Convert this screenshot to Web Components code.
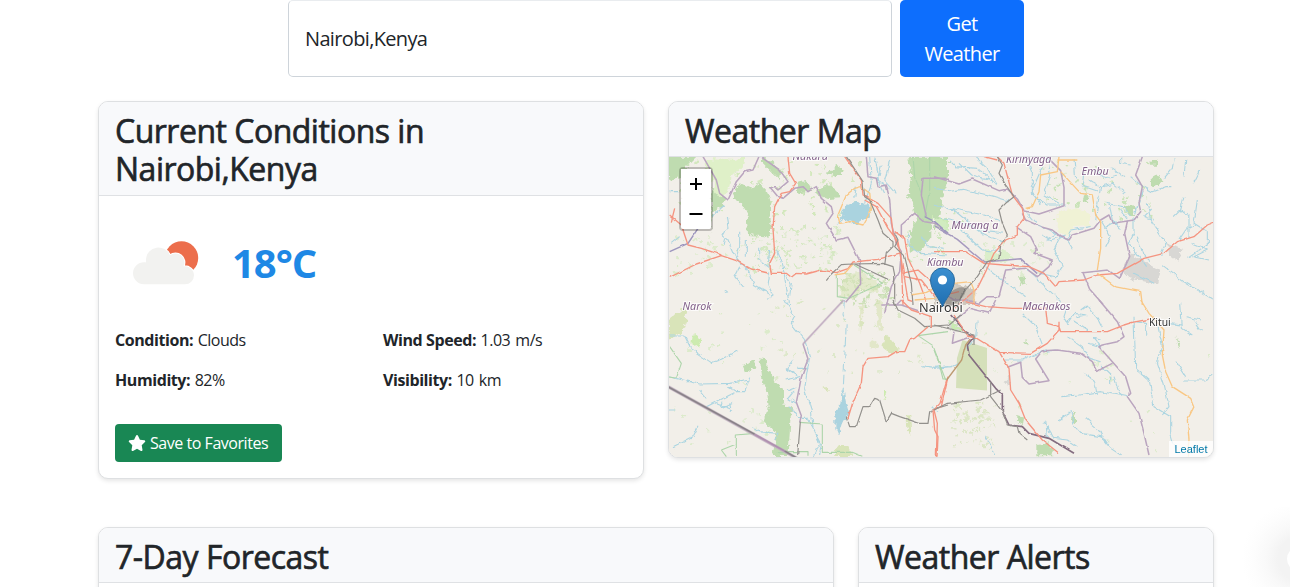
<!DOCTYPE html>
<html lang="en"><head><meta charset="utf-8"><title>Weather Dashboard</title>
<style>
html,body{margin:0;height:587px;overflow:hidden;background:#fff}
body{font-family:"Open Sans","Noto Sans",sans-serif;font-size:16px;line-height:24px;color:#212529}
</style></head><body>
<weather-app></weather-app>
<script>
const define=(name,html)=>customElements.define(name,class extends HTMLElement{
  constructor(){super();this.attachShadow({mode:'open'}).innerHTML=html;}
});

define('search-bar',`<style>
:host{display:flex;gap:8px;height:77px;width:736px;margin:0 auto;position:relative}
.field{box-sizing:border-box;width:604px;border:1px solid #ced4da;border-top-color:#e9ecef;border-radius:5px;padding:0 16px;display:flex;align-items:center;font-size:20px;letter-spacing:-.65px}
button{width:124px;border:0;border-radius:5px;background:#0d6efd;color:#fff;font:20px/30px "Open Sans","Noto Sans",sans-serif;letter-spacing:-.65px;padding:0 16px}
</style><div class="field"><slot></slot></div><button>Get Weather</button>`);

define('info-card',`<style>
:host{display:block;box-sizing:border-box;border:1px solid #dee0e2;border-radius:10px;background:#fff;box-shadow:0 2px 4px rgba(0,0,0,.1);overflow:hidden;min-width:0}
header{padding:10px 16px 6px;background:#f8f9fb;border-bottom:1px solid #dfe1e4}
h2{margin:0;font-size:32px;line-height:38.4px;font-weight:500;letter-spacing:-.5px;-webkit-text-stroke:.65px currentColor}
</style><header><h2><slot name="title"></slot></h2></header><slot></slot>`);

define('weather-icon',`<style>:host{display:block;width:100px;height:100px}svg{display:block}</style>
<svg width="100" height="100" viewBox="0 0 100 100"><circle cx="66.500" cy="44" r="16.700" fill="#ec6e4c"/>
<path d="M29 70.300a11 11 0 0 1 0-22c1 0 1.500.100 2 .200V45a12.500 12.500 0 0 1 24-3.800A9 9 0 0 1 68.500 52.300a9.200 9.200 0 0 1 10.500 9 9 9 0 0 1-9 9z" fill="#f2f2f0" stroke="#fff" stroke-width="2" paint-order="stroke"/></svg>`);

define('data-pair',`<style>:host{display:block}b{font-weight:700;letter-spacing:-.42px}span{letter-spacing:-.5px;word-spacing:1.500px;margin-left:4.500px}</style><b><slot name="label"></slot></b><span><slot></slot></span>`);

define('save-button',`<style>:host{display:block}button{display:flex;align-items:center;gap:4px;box-sizing:border-box;width:167px;height:38px;padding:0 13px;border:0;border-radius:4px;background:#198754;color:#fff;font:16px "Open Sans","Noto Sans",sans-serif;letter-spacing:-.46px;white-space:nowrap}svg{flex:none}</style>
<button><svg width="18" height="16" viewBox="0 0 576 512"><path fill="#fff" d="M316.900 18C311.600 7 300.400 0 288.100 0s-23.400 7-28.800 18L195 150.300 51.400 171.500c-12 1.800-22 10.200-25.700 21.700s-.7 24.200 7.900 32.700L137.800 329 113.200 474.700c-2 12 3 24.200 12.900 31.300s23 8 33.800 2.300l128.300-68.500 128.300 68.500c10.800 5.700 23.900 4.900 33.800-2.300s14.900-19.300 12.900-31.300L438.500 329 542.700 225.900c8.600-8.500 11.700-21.200 7.900-32.700s-13.700-19.900-25.700-21.700L381.200 150.300 316.900 18z"/></svg><slot></slot></button>`);

define('current-conditions',`<style>
:host{display:block;padding:16px;height:250px}
.now{display:flex;align-items:center;gap:17px;height:104px}
.temp{font-size:40px;font-weight:700;color:#1e88e5;letter-spacing:-1px;line-height:48px;padding-bottom:2px}
.facts{display:grid;grid-template-columns:1fr 1fr;gap:16px 24px;margin-top:12px}
save-button{margin-top:32px}
</style><div class="now"><weather-icon></weather-icon><div class="temp">18°C</div></div>
<div class="facts"><data-pair><span slot="label">Condition:</span>Clouds</data-pair><data-pair><span slot="label">Wind Speed:</span>1.03 m/s</data-pair>
<data-pair><span slot="label">Humidity:</span>82%</data-pair><data-pair><span slot="label">Visibility:</span>10 km</data-pair></div>
<save-button>Save to Favorites</save-button>`);

define('map-controls',`<style>:host{display:block;width:30px;border:2px solid rgba(0,0,0,.22);border-radius:4px;background-clip:padding-box}
button{display:flex;align-items:center;justify-content:center;box-sizing:border-box;width:30px;height:30px;border:0;padding:0;background:#fff;border-radius:0 0 2px 2px}button:first-child{border-bottom:1px solid #ccc;height:31px;border-radius:2px 2px 0 0}
svg{display:block;flex:none}
</style><button aria-label="Zoom in"><svg width="14" height="14"><path d="M7 1v12M1 7h12" stroke="#000" stroke-width="2"/></svg></button><button aria-label="Zoom out"><svg width="14" height="14"><path d="M.5 7h13" stroke="#000" stroke-width="2"/></svg></button>`);

/* Each quadrant of the map is drawn on its own 3x grid. */
define('region-map',`<style>
:host{display:block;position:relative;height:300px;background:#f2efe9}
svg.map{display:block;width:544px;height:300px}
map-controls{position:absolute;left:10px;top:10px}
.credit{position:absolute;right:0;bottom:0;width:44px;height:16px;text-align:center;background:rgba(255,255,255,.8);font:11px/16px "Liberation Sans",Arial,sans-serif;color:#0078a8}
.r{stroke:#acd5e1;stroke-width:3.3;fill:none}.red{stroke:#f59480;stroke-width:4;fill:none}.pur{stroke:#baa5bf;stroke-width:4.600;fill:none}.dk{stroke:#92908c;stroke-width:3.6;fill:none}.or{stroke:#f9c784;stroke-width:4;fill:none}.g{fill:#bfdcb0;stroke:none}.pg{fill:#d9e4b9}.gl{stroke:#add5aa;stroke-width:3.3;fill:none}
path{stroke-linejoin:round}
text{font-family:"Noto Sans",sans-serif;font-size:10.700px;font-style:italic;fill:#805e88;stroke:#fff;stroke-width:2.200px;paint-order:stroke;stroke-opacity:.75}
text.town{font-style:normal;fill:#333}
</style>
<svg class="map" viewBox="669 157 544 300">
<defs><filter id="rough" x="-5%" y="-5%" width="110%" height="110%"><feTurbulence type="fractalNoise" baseFrequency=".13" numOctaves="3" seed="7"/><feDisplacementMap in="SourceGraphic" scale="5" xChannelSelector="R" yChannelSelector="G"/></filter>
<filter id="fine" x="-5%" y="-5%" width="110%" height="110%"><feTurbulence type="fractalNoise" baseFrequency=".12" numOctaves="2" seed="5"/><feDisplacementMap in="SourceGraphic" scale="2.500" xChannelSelector="R" yChannelSelector="G"/></filter>
<filter id="edge"><feTurbulence type="fractalNoise" baseFrequency=".2" numOctaves="3" seed="3"/><feDisplacementMap in="SourceGraphic" scale="7" xChannelSelector="R" yChannelSelector="G"/></filter>
<linearGradient id="pin" x2="0" y2="1"><stop stop-color="#3b8fd0"/><stop offset="1" stop-color="#1f6eb0"/></linearGradient></defs>
<rect x="669" y="157" width="544" height="300" fill="#f2efe9"/>
<g filter="url(#edge)">
 <g id="specks"></g>
 <g transform="translate(668 150) scale(.333333)">
  <path class="g" d="M0 20h85l-30 30-15 30-40 10zM130 110l50 40-45 40-5 60zM215 100l30 15 30-15 25 25 10 40-5 95-65-5-5-70-20-35-25-5zM285 20l25 15 30 30-5 25-30-30-20-20zM385 95l30-5 15 25-20 20-22-10zM440 125l40-22 25 17 15 25-40 2-30-12zM478 65l22-5 0-15 22 5 0 25-25 5zM720 20h95l10 30 15 30-20 60-30 80 0 40-35 50-30-10 5-60 15-40-25-70 10-50z"/>
  <path d="M110 40l30-15 60 5 30-10-5 25-35 40-10 40-25 20-20-25 10-30-30 15z" fill="#dff0c8"/>
  <path class="pg" d="M520 400l20-30 40-5 45 30 5 35-50-10-20 25-45-5z" opacity=".6"/><path d="M790 190l50 20v40l-35-30z" fill="#cbeab4"/>
  <path d="M528 170l30-13 20 8 25-3 3 35-25 15-15 10-35-12-16 0 10-12z" fill="#aad3df"/>
 </g>
 <g transform="translate(934 150) scale(.333333)">
  <path class="g" d="M0 20h42l0 60-18 70-5 50-19 45zM650 85l20-12 12 18-10 20-18-4zM650 32h22v12h-22zM450 135l12 5-3 20-12-8zM252 375l20 3 4 22-15 5zM575 165l25 5 0 30-25-5z"/>
  <path d="M368 190l55-18 45 20 0 35-50 5-15 30-35-25z" fill="#f0f2d5"/><path d="M590 310l90 50-8 42-95-18-10-35zM700 282l48 15-18 35-25-18z" fill="#d8d7d4"/>
  <path d="M0 415l30-5 25-10 50 10 20 15-5 40H0z" fill="#cfc8be"/><path d="M155 295l25 15 30-10 35 25-60 8-35 10z" fill="#dbeeca"/><path d="M0 200l35 12 10 35-45-20z" fill="#d1ecc0"/>
 </g>
 <g transform="translate(668 300) scale(.333333)">
  <path class="g" d="M275 175l20 3 0 20 25 45 25 20v50l30 10-8 35-5 110h-50l15-60-15-20-25-25 15-40-5-50-15-40zM225 195l35-15 5 20-35 20z"/>
  <path class="pg" d="M5 55l20-15 25-20 5 40-15 40-40 20zM650 105l15 5 30 40-30 10-22-18zM500 450l10-12h30l12 30h-50zM715 345l12 5 3 60-12-25zM470 260l13 10-8 10z"/>
  <path class="pg" opacity=".65" d="M622 0l16 0 5 90-10 5zM577 10l10 0-2 60-10 30zM605 120l25 5-5 20-20-5z"/>
  <path d="M525 262l-5 45-18 30 0 50 10 25 12-40 18-35-8-30z" fill="#aad3df"/><path d="M75 100l25 20-10 25-20-15zM645 270l10 5-7 30z" fill="#cdebb0"/>
 </g>
 <g transform="translate(934 300) scale(.333333)">
  <path class="g" d="M310 435l30-5 20 18-5 18h-45zM250 345l20 5-3 25-18-10zM415 335l8 10 0 25-8-5zM728 115l10 20-4 8zM275 115l6 20-7-3z"/><path d="M210 245l18-20v35zM45 60l40 25-15 15-25-15z" fill="#d8d7d4"/><path d="M45 60l45 30-35 0z" fill="#c8eab2"/>
 </g>
</g>
<path d="M962.500 340l24.500 8v42.500l-31-2.500 1-30z" fill="#d5e0ba"/>
<g filter="url(#rough)">
 <g transform="translate(668 150) scale(.333333)">
  <path class="r" d="M175 202l5 30-15 25 15 15 15 35 10 20 35 35 20 45 45 25M215 245l0 45-10 30M235 270v50M275 290l0 40 25 20 5-50M325 300l20 50 10 60 10 55M170 265l-5 20M215 350l-15 30 25 30M305 370l-5 35 15 30-15 10M355 375l15 25-5 35M180 430l-10-8M565 110l-5 30M605 20l5 80-20 60M620 20l15 75 30 20M640 50l-10 40 20 40M665 30l-15 60 35 40M5 125h30M10 280l25-20M170 165l-40 35M720 250l5 40 30 20 85 5M760 260l20 30 50 5M510 220l25-20"/>
 </g>
 <g transform="translate(934 150) scale(.333333)">
  <path class="r" d="M0 115l55 8 30-5 90 20 50 15M50 35l15 15 65 5 30 25 25 25M75 40l35 35 65 15M0 165l60 15 70 60 55 5 20 5M50 175l100 20 55 20M20 205l90 20 40 30 55 20M80 240l65 60 55 5M120 20l40 35 30 50M275 25l20 45 0 60 40 35 60 0M325 50l-30 70 25 45M340 20l10 60-20 55 45 25M420 25l5 60M465 90l30 20 40-10 40 30M450 65l-5 40 45 15M480 60l30 25 40-10M530 50l40 30M560 20l0 20 30 5M590 80l30 25 35 20 40-15 20 0M625 120l-20 70M500 110l-10 60-5 40M525 160l10 50 25 25M560 180l20 30M515 160l55 10 20 30M280 190l30 35 40 15 50 30 10-30 60-10M325 255l25 15 45-15M335 270l35-20M380 260l-20 40 25 50-20 30-50-10M400 270l15 25M500 210l30 50-15 30M510 235l35-20M600 205l0 45-15 30 50 70M610 260l15 50 25 25M640 160l10 50 45 70-15 35M650 180l-20 20 30 10M750 140l-10 40 25 20 0 60M740 180l-20 20M790 150l-10 70 40 25 0 40-60 40M780 225l-25 15-20 30M770 280l50 20-40 20 45 10M600 370l60 30M690 350l60 45 90 55M155 350l50 40 70 50M280 360l60 55 40 40M720 25l-5 30-25 30M755 30l-5 50M800 60l-20 40"/>
 </g>
 <g transform="translate(668 300) scale(.333333)">
  <path class="r" d="M5 108l45 0 20 40 60 40 30-10 45-25M5 230l90 22 90-2 60-10M245 230l-15 45-25 0-90 45M180 260l25 15M75 245l-20 0M95 270l20 25M145 310l50 20M165 305l-5 20 35-15M185 310l5 25M15 440l60-30 15-30M5 330l20 0M250 380l20 15 60 5-10 20M350 0l30 50-10 20 40 50 15 50-10 60-5 40 20 60 5 50 20 50-20 50-40 5M365 320l25 35 30 0 40 75-5 35M385 205l35 0M360 270l25-10M375 180l-20 25 40 25-45 10M380 270l-20 25 25 15M530 320l15 30M760 197l40 5 40-5M790 320l20 15"/>
  <path class="r" stroke-dasharray="28 10" d="M530 0l-5 45 10 15-5 120-5 100"/>
 </g>
 <g transform="translate(934 300) scale(.333333)">
  <path class="r" d="M130 60l-5 50-25 35M0 205l50-5 30-15M210 180l55 0 60-25 40-5M265 40l40 40 20 50M400 20l-10 30 10 20 20-30 40 5M415 60l45 30M430 50l25-5M440 30l20-15 30 40 15 30M400 110l50 35 15 30 35 10M465 130l35 10-20-25 20 5M450 220l30 20 10 45M500 195l30 30 0 30M540 230l20 60M385 290l50-5 65-10 80 15M335 360l5 50M375 360l40-25 0 35 25 30 60 10 30 35 30 20M455 355l35 30 30 45M330 365l30 50 40 5 30 20M600 50l5 155 40 35 15 80 50 30 0 50 15 50M605 65l30 5 0 40M670 70l15 70-15 50 20 60 15 70-20 25M740 10l5 75 30 20M785 65l20 30M700 70l45 5M750 240l60 0 30-15M725 185l30 45M800 60l-45-10M155 410l30 55"/>
 </g>
</g>
<g filter="url(#fine)">
 <g transform="translate(668 150) scale(.333333)">
  <path class="gl" d="M508 370l0 70 35 5 100-45-85-55M735 20l5 60 20 50M785 20l0 100-15 80"/>
  <path class="pur" d="M105 20l40 70 10 40 25 20 25-55 25-30 25-5 20-45 10 10 50 35 25 35-30 25-10-10h-15l25 30 15 5 35-30 25-5 15 15 25-15 15 35 30 25 5 20-20 30 30 50 35-8 35 70 3 70-45 55M595 20l5 60 25 5 5 25 25-5 10 45 5 70 15 60 15 25-5 60-25 45-20 80M700 260l0-35 40-35 30 25 30 5 40 30M840 85l-75 0-5 50 15 65"/>
  <path d="M5 305l55-25 30-45M770 200l30 15 40 35" stroke="#9d96be" stroke-width="4.500" fill="none"/>
  <path class="red" d="M360 20l5 50 18 30-18 25-25 5-20 40-5 65 5 75-15 30 5 30h45l15 12 15-12 30 2 45-12 45 8 35-12 15-20 75-8 70-20M5 382l80-40 75-25 45 15 45 25 50 12M5 195l35 30 20 60 40 10 60 20M530 20l50 70 5 45 45 25 40 45 5 45 20 50 25 150 15 5M590 150l35 20 35 65 30 40 10 60 5 130M680 245l30 20 10 60 35 75 20 55M700 370l50-10 40 35 50-10M710 380l50 10 40 50M10 215l10-40"/>
  <path class="or" d="M580 110l25 20 5 50-25 45-40-10-30 5-5-25 25-60 25-20zM730 435l45-8 65-30M740 450l60-5 40-20M500 375l30-5 25-28"/>
  <path class="dk" d="M535 20l50 75 5 45 15 10 25 60 15 40 30 25 0 15-20 20-5 35M475 392l15-20 30-28 35-2 90-2 30 10 5 25v90M560 342l40 18 60 28M680 250l10 20-10 20 30 30 20 80 5 65"/>
 </g>
 <g transform="translate(934 150) scale(.333333)">
  <path class="pur" d="M0 80l75 22 40-15 80 35 25-5 30 30 20 35 45 10 75-25 0-55-10-50-30-30M245 230l45 30 20 40-10 10 55 20-10 20-35 30-35-25-60 5-20 80-35 0-25 20-35-10-40 0-30-20M625 20l-20 55 20 35-10 50 5 25-20 25-65 10-10-25-25 15-20 25-65 20-10 15-25-10-25-20-35-10-45-20-10-20M580 215l-8 35 15 70-30 65-35-25-75 8 20 50 40 45"/>
  <path d="M0 228l70 40 80 68 60-5 50-5 50 45" stroke="#a69abf" stroke-width="4.500" fill="none"/>
  <path class="red" d="M190 20l20 20 25 95 30 40 5 30-20 25 0 25-35 15-35 40-25 55-25 50-80 70M0 305h60l35 0 55 35 60 5 75 5 45 20 35 40 10-15 75-5 40-15 60-5 80-45 60-15 40-35 50-15 40-35 55-22M0 380l25 20 0 45M150 20l40 10M15 440l60-15"/>
  <path class="or" d="M375 20l-5 45-50 10-5 50-20 45-20 5M380 65l60 65 35 5 10 60 15 20 0 80-10 65M370 30h60M490 370l55 40 75 15 5 40M60 400l50-5 10 25 0 45"/>
  <path class="dk" d="M190 20l15 25-10 25 20 35 25 35-25 20-20 20 10 40 15 35-20 30-5 40-35 10-30 45-45 50-15 40"/>
 </g>
 <g transform="translate(668 300) scale(.333333)">
  <path class="gl" d="M5 140l35 50-15 45-25-5M205 465v-60l55-5M160 450l45-18M160 450l15 20M395 367l68 5 0 85 90 0 30 12M840 95l-90 12 45 30 15 40 15 60h15M325 455h95v12"/>
  <path class="pur" d="M405 132l15 45-20 55-15 75 15 40-5 20M640 15l60 0 60 20M685 15l15-15"/>
  <path class="dk" d="M397 365l-8 100M535 350l10 30 20 0 20-60 20 0 15-25 15 5 20 65 15-25 25 10 60 20h25l5-35 20-10 35-10M675 0l15 30 50 25 30 25 70-5"/>
  <path class="red" d="M540 355l15-50 25-55 5-50 15-25 60-5 25-15h25l15-35 15-5 40-35M700 0l30 30 60 20 0 30M840 230l-20 90-25 10 5 60 10 20-3 60"/>
 </g>
 <g transform="translate(934 300) scale(.333333)">
  <path class="pur" d="M70 55l35-30 60 15 20-40M495 0l55 65 20 45-20 15-45 10-10 5 80 90 15 50-10 10 35 50 15 60 15 65M220 202l40-15 5 45 20 20 60-10-40-65 20-25 45-2 70 10 35 25 15 30 15-10 30-15M60 95l-5 35 50-18"/>
  <path d="M120 110l-20 25 5 30 80 100 20 20 0 50 20 40 40 5 20 20 60 15 75 45M50 45l45 50 25 15" stroke="#846d80" stroke-width="5" fill="none"/>
  <path class="red" d="M60 45l40 60 20 5 40 25 35 20 30 50 5 65 25 40 20 50 50 60 50 40M95 5l60 15 80 5 100 0 5 45 35 10 5 15 60 0 80 0 50-20 25-8 55-10M375 65v25l-35 40-50 30-95-3M0 330l10 40-3 100M38 240l-20 70-18 20"/>
  <path d="M38 240l45-60 12-45 15-20" stroke="#bd9b71" stroke-width="4" fill="none"/>
  <path class="or" d="M620 0l25 40 45 50-5 75 10 50 20 45 55 35 10 25-20 40 5 60-5 50"/>
  <path class="dk" d="M0 75l120 30 0 30M0 330l40-20 100-10 60-30M170 245v45l35 45 15 40 30 5 5 20 25 20M40 80l40-35"/><path class="gl" d="M0 150l35 90"/>
 </g>
</g>
<g transform="translate(668 300) scale(.333333)" fill="none"><path d="M527 0L405 132" stroke="#bea9bf" stroke-width="5"/><path d="M0 260l385 214" stroke="#c3b2c2" stroke-width="9"/><path d="M0 260l260 143M350 453l35 20" stroke="#888287" stroke-width="5"/><path d="M260 403l90 50" stroke="#b090b0" stroke-width="6"/></g>
<text x="792.500" y="160">Nakuru</text><text x="1006" y="162.500">Kirinyaga</text><text x="1081.500" y="175">Embu</text><text x="951.500" y="228.500">Murang\`a</text><text x="927" y="265.500">Kiambu</text><text x="682.500" y="309.500">Narok</text><text x="1022.500" y="309.500">Machakos</text><text class="town" x="1149" y="325.500" style="font-size:10.300px">Kitui</text><text class="town" x="919" y="311.500" style="font-size:12.700px">Nairobi</text>
<ellipse cx="954" cy="297" rx="14" ry="6" fill="#333" opacity=".3" transform="rotate(-38 954 297)"/>
<path d="M942.500 307c-1.500-6-12-16.500-12-27a12 12 0 0 1 24 0c0 10.500-10.500 21-12 27z" fill="url(#pin)" stroke="#2c6d9f"/><circle cx="942.500" cy="280" r="4.600" fill="#fff"/>
</svg><map-controls></map-controls><div class="credit">Leaflet</div>`);

/* Soft halo of the round floating button at the right edge of the window. */
define('edge-glow',`<style>:host{display:block;position:absolute;right:0;top:507px;width:60px;height:80px;overflow:hidden}.glow{width:120px;height:120px;margin:-8px 0 0 10px;background:radial-gradient(circle,#f3f3f3 0 22px,#f9f9f9 34px,#fdfdfd 47px,#fff 58px);display:grid;place-items:center}.dot{width:26px;height:26px;border-radius:14px;background:#fff}</style><div class="glow"><div class="dot"></div></div>`);

define('weather-app',`<style>
:host{display:block;position:relative;width:1290px;height:587px;overflow:hidden}
main{width:1116px;margin-left:98px}
.row{display:grid;gap:24px;align-items:start}
.top{grid-template-columns:1fr 1fr;margin-top:24px}
.bottom{grid-template-columns:736px 356px;margin-top:48px}
.bottom info-card{height:160px}
.current{height:378px}.map{height:357.400px}
</style><main><search-bar>Nairobi,Kenya</search-bar>
<div class="row top"><info-card class="current"><span slot="title">Current Conditions in Nairobi,Kenya</span><current-conditions></current-conditions></info-card>
<info-card class="map"><span slot="title">Weather Map</span><region-map></region-map></info-card></div>
<div class="row bottom"><info-card><span slot="title">7-Day Forecast</span></info-card><info-card><span slot="title">Weather Alerts</span></info-card></div></main><edge-glow></edge-glow>`);

/* Scatter small scrubland patches over the western and central plains. */
const map=document.querySelector('weather-app').shadowRoot.querySelector('region-map').shadowRoot;
let seed=19;const rnd=()=>(seed=(seed*16807)%2147483647)/2147483647;
const zones=[[680,160,190,55,90,'#d3e8bd'],[750,225,90,45,100,'#d5e8c2'],[670,235,80,40,30,'#dcebcb'],[840,270,50,35,90,'#c9dfb4'],[770,300,160,80,35,'#dce8c8'],[950,400,45,45,65,'#dce6c6'],[1040,160,110,60,40,'#c9e3b8'],[980,240,70,35,25,'#deebcf'],[670,310,110,140,35,'#dcebcb'],[980,320,230,130,25,'#dcebcb'],[905,205,60,55,30,'#cfe6bd']];
let patches='';
for(const [x,y,w,h,n,c] of zones)for(let i=0;i<n;i++){patches+=`<rect x="${(x+rnd()*w).toFixed(1)}" y="${(y+rnd()*h).toFixed(1)}" width="${(1+rnd()*3).toFixed(1)}" height="${(1+rnd()*3).toFixed(1)}" fill="${c}"/>`;}
map.querySelector('#specks').innerHTML=patches;
</script></body></html>
